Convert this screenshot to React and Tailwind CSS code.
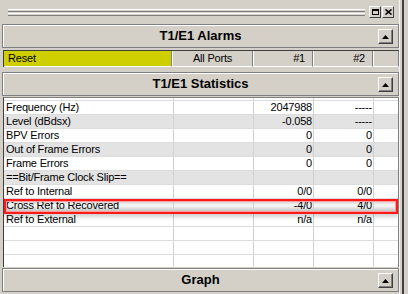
import React from "react";

const rows = [
  { name: "Frequency (Hz)", a: "", b: "2047988", c: "-----", shade: false },
  { name: "Level (dBdsx)", a: "", b: "-0.058", c: "-----", shade: true },
  { name: "BPV Errors", a: "", b: "0", c: "0", shade: false },
  { name: "Out of Frame Errors", a: "", b: "0", c: "0", shade: true },
  { name: "Frame Errors", a: "", b: "0", c: "0", shade: false },
  { name: "==Bit/Frame Clock Slip==", a: "", b: "", c: "", shade: true },
  { name: "Ref to Internal", a: "", b: "0/0", c: "0/0", shade: false },
  { name: "Cross Ref to Recovered", a: "", b: "-4/0", c: "4/0", selected: true },
  { name: "Ref to External", a: "", b: "n/a", c: "n/a", shade: false },
  { name: "", a: "", b: "", c: "", shade: false },
  { name: "", a: "", b: "", c: "", shade: false },
  { name: "", a: "", b: "", c: "", shade: false },
];

// little raised button with an up arrow, as on each section bar
const UpButton = () => (
  <div className="absolute right-[5px] top-[4px] w-[15px] h-[15px] bg-[#d4d0c8] border-t border-l border-t-white border-l-white border-b border-r border-b-[#404040] border-r-[#404040] shadow-[inset_-1px_-1px_0_#808080] flex items-center justify-center">
    <svg width="7" height="4" viewBox="0 0 7 4">
      <polygon points="3.5,0 7,4 0,4" fill="#000" />
    </svg>
  </div>
);

const SectionBar = ({ title }) => (
  <div className="relative h-[24px] border border-[#808080] shadow-[inset_1px_1px_0_#fff] flex items-center justify-center">
    <span className="font-bold text-[13px] text-black">{title}</span>
    <UpButton />
  </div>
);

const TitleButton = ({ children }) => (
  <div className="w-[12px] h-[12px] bg-[#d4d0c8] border-t border-l border-t-white border-l-white border-b border-r border-b-[#404040] border-r-[#404040] flex items-center justify-center">
    {children}
  </div>
);

const App = () => {
  return (
    <div
      className="w-[408px] h-[294px] bg-[#d4d0c8] flex overflow-hidden text-black"
      style={{ fontFamily: '"Liberation Sans", Arial, sans-serif' }}
    >
      <div className="w-[399px] pl-[2px] flex flex-col">
        {/* title strip with grip lines */}
        <div className="h-[24px] flex items-center pl-[6px] pr-[5px] gap-[4px]">
          <div className="flex-1 flex flex-col gap-[1px] pt-[1px]">
            <div className="h-[3px] border-t border-t-white border-b border-b-[#808080] bg-[#d4d0c8]" />
            <div className="h-[3px] border-t border-t-white border-b border-b-[#808080] bg-[#d4d0c8]" />
          </div>
          <div className="flex gap-[1px]">
            <TitleButton>
              <div className="w-[7px] h-[6px] border border-black border-t-2" />
            </TitleButton>
            <TitleButton>
              <svg width="7" height="6" viewBox="0 0 7 6">
                <path d="M0.5 0.5 L6.5 5.5 M6.5 0.5 L0.5 5.5" stroke="#000" strokeWidth="1.6" />
              </svg>
            </TitleButton>
          </div>
        </div>

        <SectionBar title="T1/E1 Alarms" />

        {/* column header row */}
        <div className="mt-[2px] ml-[1px] h-[17px] flex text-[11px] tracking-[-0.2px] border-t border-l border-t-[#404040] border-l-[#404040]">
          <div className="w-[168px] bg-[#cfcf00] border-r border-r-[#808080] border-b border-b-white flex items-center pl-[4px]">
            Reset
          </div>
          <div className="w-[81px] border-l border-l-white border-r border-r-[#808080] border-b border-b-white flex items-center justify-center">
            All Ports
          </div>
          <div className="w-[60px] border-l border-l-white border-r border-r-[#808080] border-b border-b-white flex items-center justify-end pr-[7px]">
            #1
          </div>
          <div className="w-[60px] border-l border-l-white border-r border-r-[#808080] border-b border-b-white flex items-center justify-end pr-[7px]">
            #2
          </div>
          <div className="flex-1 border-l border-l-white border-r border-r-[#808080] border-b border-b-white" />
        </div>

        <div className="h-[5px]" />
        <SectionBar title="T1/E1 Statistics" />

        {/* statistics grid */}
        <div className="relative mt-[1px] ml-[1px] h-[170px] bg-white border-l border-l-[#404040] border-t border-t-[#808080] border-r border-r-[#808080] overflow-hidden text-[11px] tracking-[-0.2px]">
          <div className="h-[2px] flex">
            <div className="w-[170px] border-r border-r-[#d0d0d0]" />
            <div className="w-[80px] border-r border-r-[#d0d0d0]" />
            <div className="w-[60px] border-r border-r-[#d0d0d0]" />
            <div className="w-[60px] border-r border-r-[#d0d0d0]" />
          </div>
          {rows.map((r, i) => (
            <div
              key={i}
              className={
                "flex h-[14px] leading-[13px] border-t border-t-[#dcdcdc] " +
                (r.selected
                  ? "bg-[linear-gradient(to_bottom,#bcbcbc,#f4f4f4_45%,#f4f4f4_55%,#bcbcbc)]"
                  : r.shade
                  ? "bg-[#e3e3e3]"
                  : "bg-white")
              }
            >
              <div className="w-[170px] border-r border-r-[#d0d0d0] pl-[2px] whitespace-nowrap">{r.name}</div>
              <div className="w-[80px] border-r border-r-[#d0d0d0] text-right pr-[1px]">{r.a}</div>
              <div className="w-[60px] border-r border-r-[#d0d0d0] text-right pr-[1px]">{r.b}</div>
              <div className="w-[60px] border-r border-r-[#d0d0d0] text-right pr-[1px]">{r.c}</div>
              <div className="flex-1" />
            </div>
          ))}
          {/* red highlight round the selected row */}
          <div className="absolute left-0 right-0 top-[101px] h-[15px] border-2 border-[#ff1a1a] shadow-[inset_0_0_0_1px_#ff9c9c,0_3px_4px_rgba(0,0,0,0.18)]" />
        </div>

        <div className="h-[1px]" />
        <SectionBar title="Graph" />
      </div>
      <div className="w-[1px] bg-[#f4f4f4]" />
      <div className="w-[2px]" />
      <div className="w-[2px] bg-[#404040]" />
      <div className="flex-1" />
    </div>
  );
};

export default App;
